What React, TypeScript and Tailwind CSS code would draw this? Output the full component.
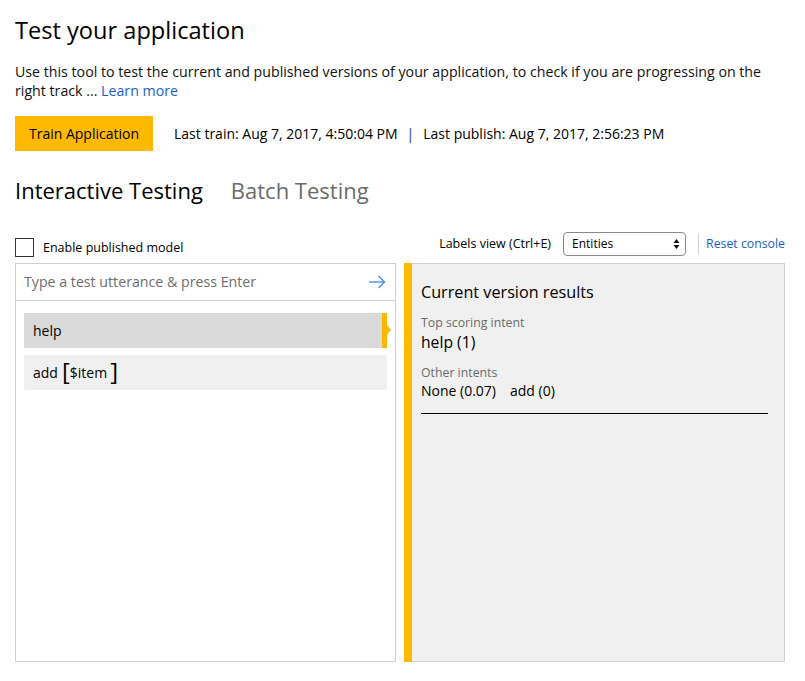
import React from "react";

const font = { fontFamily: '"Open Sans", "Noto Sans", Arial, sans-serif' };

function ArrowRight() {
  return (
    <svg width="17" height="14" viewBox="0 0 17 14" fill="none" stroke="#4a90e2" strokeWidth="1.4">
      <path d="M0 7h15.5" />
      <path d="M9.5 1l6 6-6 6" />
    </svg>
  );
}

function SelectArrows() {
  return (
    <svg width="7" height="12" viewBox="0 0 7 12" fill="#111">
      <path d="M3.5 1L6.5 5H0.5z" />
      <path d="M3.5 11L6.5 7H0.5z" />
    </svg>
  );
}

export default function App() {
  return (
    <div className="w-[805px] h-[681px] bg-white text-black pl-[15px] pr-[20px] pt-[13px]" style={font}>
      {/* Header */}
      <h1 className="text-[23.6px] leading-[34px] font-normal">Test your application</h1>
      <p className="mt-[15px] text-[14.2px] leading-[19px] text-[#111]">
        Use this tool to test the current and published versions of your application, to check if you are progressing on the
        right track ... <span className="text-[#1a5fc7]">Learn more</span>
      </p>

      {/* Train row */}
      <div className="mt-[16px] flex items-center text-[14px]">
        <button className="h-[35px] w-[138px] bg-[#ffb900] text-[14px] text-black">Train Application</button>
        <span className="ml-[21px]">Last train: Aug 7, 2017, 4:50:04 PM</span>
        <span className="mx-[9px] text-[#1a3f8f]">|</span>
        <span>Last publish: Aug 7, 2017, 2:56:23 PM</span>
      </div>

      {/* Tabs */}
      <div className="mt-[22px] flex items-center gap-[28px] text-[22px] leading-[34px]">
        <span>Interactive Testing</span>
        <span className="text-[#6b6b6b]">Batch Testing</span>
      </div>

      {/* Toolbar */}
      <div className="mt-[25px] flex items-start justify-between h-[24px]">
        <label className="mt-[5px] flex items-center gap-[9px] text-[12.5px]">
          <span className="w-[19px] h-[19px] border border-[#333] bg-white" />
          <span className="mt-[2px]">Enable published model</span>
        </label>
        <div className="flex items-center h-[24px] text-[12.5px]">
          <span>Labels view (Ctrl+E)</span>
          <div className="ml-[12px] w-[123px] h-[24px] border border-[#8a8a8a] rounded-[4px] flex items-center justify-between pl-[8px] pr-[5px] text-[12px]">
            <span>Entities</span>
            <SelectArrows />
          </div>
          <span className="ml-[12px] w-px h-[20px] bg-[#d0d0d0]" />
          <span className="ml-[7px] text-[#1a5fc7] text-[12.3px]">Reset console</span>
        </div>
      </div>

      {/* Panels */}
      <div className="mt-[7px] flex gap-[8px] h-[399px]">
        <div className="w-[381px] border border-[#cfcfcf] flex flex-col">
          <div className="h-[37px] border-b border-[#cfcfcf] flex items-center justify-between pl-[8px] pr-[9px]">
            <span className="text-[14.2px] text-[#6e6e6e]">Type a test utterance &amp; press Enter</span>
            <ArrowRight />
          </div>
          <div className="px-[8px] pt-[12px] flex flex-col gap-[7px]">
            <div className="relative h-[35px] bg-[#dadada] flex items-center pl-[9px] text-[14px]">
              help
              <span className="absolute right-0 top-0 h-full w-[5px] bg-[#ffb900]" />
              <span className="absolute right-[-4px] top-[12px] w-0 h-0 border-y-[5px] border-y-transparent border-l-[4px] border-l-[#ffb900]" />
            </div>
            <div className="h-[35px] bg-[#f0f0f0] rounded-[2px] flex items-center pl-[9px] text-[14px]">
              add
              <span className="ml-[4px] text-[24px] leading-none -mt-[3px]">[</span>
              <span>$item</span>
              <span className="ml-[3px] text-[24px] leading-none -mt-[3px]">]</span>
            </div>
          </div>
        </div>

        <div className="flex-1 flex border border-[#cfcfcf] bg-[#f0f0f0]">
          <div className="w-[8px] bg-[#ffb900] -my-px -ml-px" />
          <div className="flex-1 pl-[9px] pr-[16px] pt-[16px]">
            <div className="text-[16.2px] leading-[24px]">Current version results</div>
            <div className="mt-[11px] text-[12.3px] leading-[16px] text-[#6b6b6b]">Top scoring intent</div>
            <div className="text-[15.7px] leading-[22px]">help (1)</div>
            <div className="mt-[12px] text-[12.3px] leading-[16px] text-[#6b6b6b]">Other intents</div>
            <div className="text-[14px] leading-[20px] flex gap-[14px]">
              <span>None (0.07)</span>
              <span>add (0)</span>
            </div>
            <div className="mt-[12px] h-px bg-black" />
          </div>
        </div>
      </div>
    </div>
  );
}
